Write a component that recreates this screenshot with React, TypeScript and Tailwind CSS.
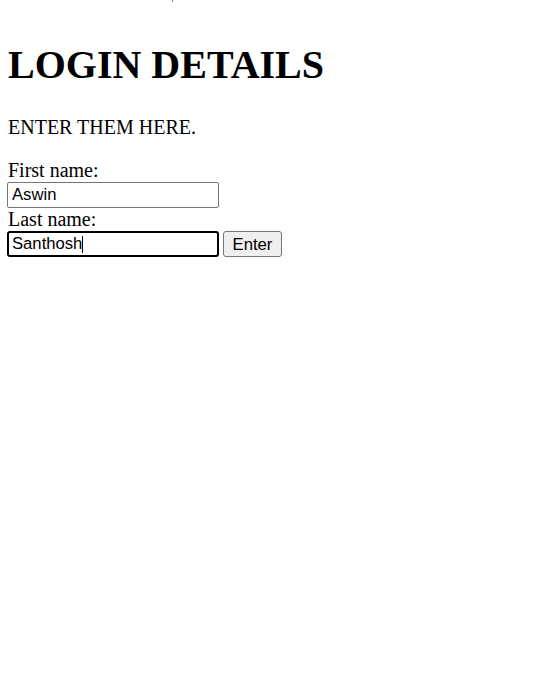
import React from "react";

export default function App() {
  return (
    <div className="relative min-h-screen bg-white pl-[8px] pt-[42px] text-black font-['Liberation_Serif',serif]">
      <span className="absolute left-[172px] top-0 h-[2px] w-px bg-[#a08c78]" />
      <h1 className="text-[40px] font-bold leading-[46px]">LOGIN DETAILS</h1>
      <p className="mt-[28px] text-[20px] leading-[23px]">ENTER THEM HERE.</p>
      <form className="mt-[20px]" onSubmit={(e) => e.preventDefault()}>
        <label className="block text-[20px] leading-[23px]">First name:</label>
        <input
          readOnly
          value="Aswin"
          className="-ml-px block h-[26px] w-[212px] rounded-[2px] border border-[#767676] bg-white pl-[4px] text-[16.67px] text-black outline-none font-['Liberation_Sans',Arial,sans-serif]"
        />
        <label className="block text-[20px] leading-[23px]">Last name:</label>
        <div className="-ml-px flex items-center">
          <div className="relative">
            <input
              readOnly
              value="Santhosh"
              className="block h-[26px] w-[212px] rounded-[3px] border-2 border-black bg-white pl-[3px] text-[16.67px] text-black outline-none font-['Liberation_Sans',Arial,sans-serif]"
            />
            <span className="absolute left-[75px] top-[5px] h-[17px] w-px bg-black" />
          </div>
          <button
            type="submit"
            className="ml-[4px] h-[26px] w-[59px] rounded-[3px] border border-[#767676] bg-[#efefef] text-[16.67px] text-black font-['Liberation_Sans',Arial,sans-serif]"
          >
            Enter
          </button>
        </div>
      </form>
    </div>
  );
}
